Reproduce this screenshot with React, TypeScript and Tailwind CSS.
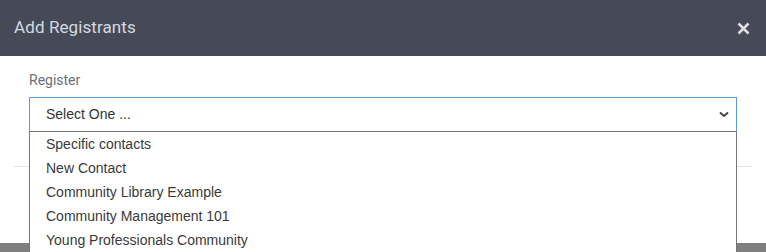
const options = [
  "Specific contacts",
  "New Contact",
  "Community Library Example",
  "Community Management 101",
  "Young Professionals Community",
];

export default function App() {
  return (
    <div className="relative h-[252px] w-[766px] overflow-hidden bg-[#7f7f7f]">
      <div className="h-[243px] bg-white">
        <div className="flex h-[56px] items-center justify-between bg-[#464a57] pl-[14px] pr-[16px]">
          <h1 className="text-[17px] tracking-[0.1px] text-[#d3d9e2] [font-family:Roboto,sans-serif]">Add Registrants</h1>
          <svg width="13" height="13" viewBox="0 0 13 13" className="mt-[1px]">
            <path d="M1.5 1.5 L11.5 11.5 M11.5 1.5 L1.5 11.5" stroke="#dcdee3" strokeWidth="2.6" strokeLinecap="butt" />
          </svg>
        </div>

        <div className="px-[29px] pt-[14px]">
          <label className="block text-[14px] leading-[20px] text-[#6c707a] [font-family:Roboto,sans-serif]">Register</label>
          <div className="mt-[7px] flex h-[35px] items-center justify-between border border-[#5d9cd8] pl-[16px] pr-[7px] text-[14px] text-[#333] [font-family:'Liberation_Sans',Arial,sans-serif]">
            <span>Select One ...</span>
            <svg width="10" height="7" viewBox="0 0 10 7">
              <path d="M1 1.5 L5 5 L9 1.5" fill="none" stroke="#444" strokeWidth="2" />
            </svg>
          </div>
        </div>

        <div className="mx-[14px] mt-[34px] border-t border-[#e5e5e5]" />
      </div>

      <ul className="absolute left-[29px] top-[131px] w-[708px] border-x border-t border-[#767676] bg-white text-[14px] text-[#3a3a3a] [font-family:'Liberation_Sans',Arial,sans-serif]">
        {options.map((o) => (
          <li key={o} className="flex h-[24px] items-center pl-[16px]">
            {o}
          </li>
        ))}
      </ul>
    </div>
  );
}
